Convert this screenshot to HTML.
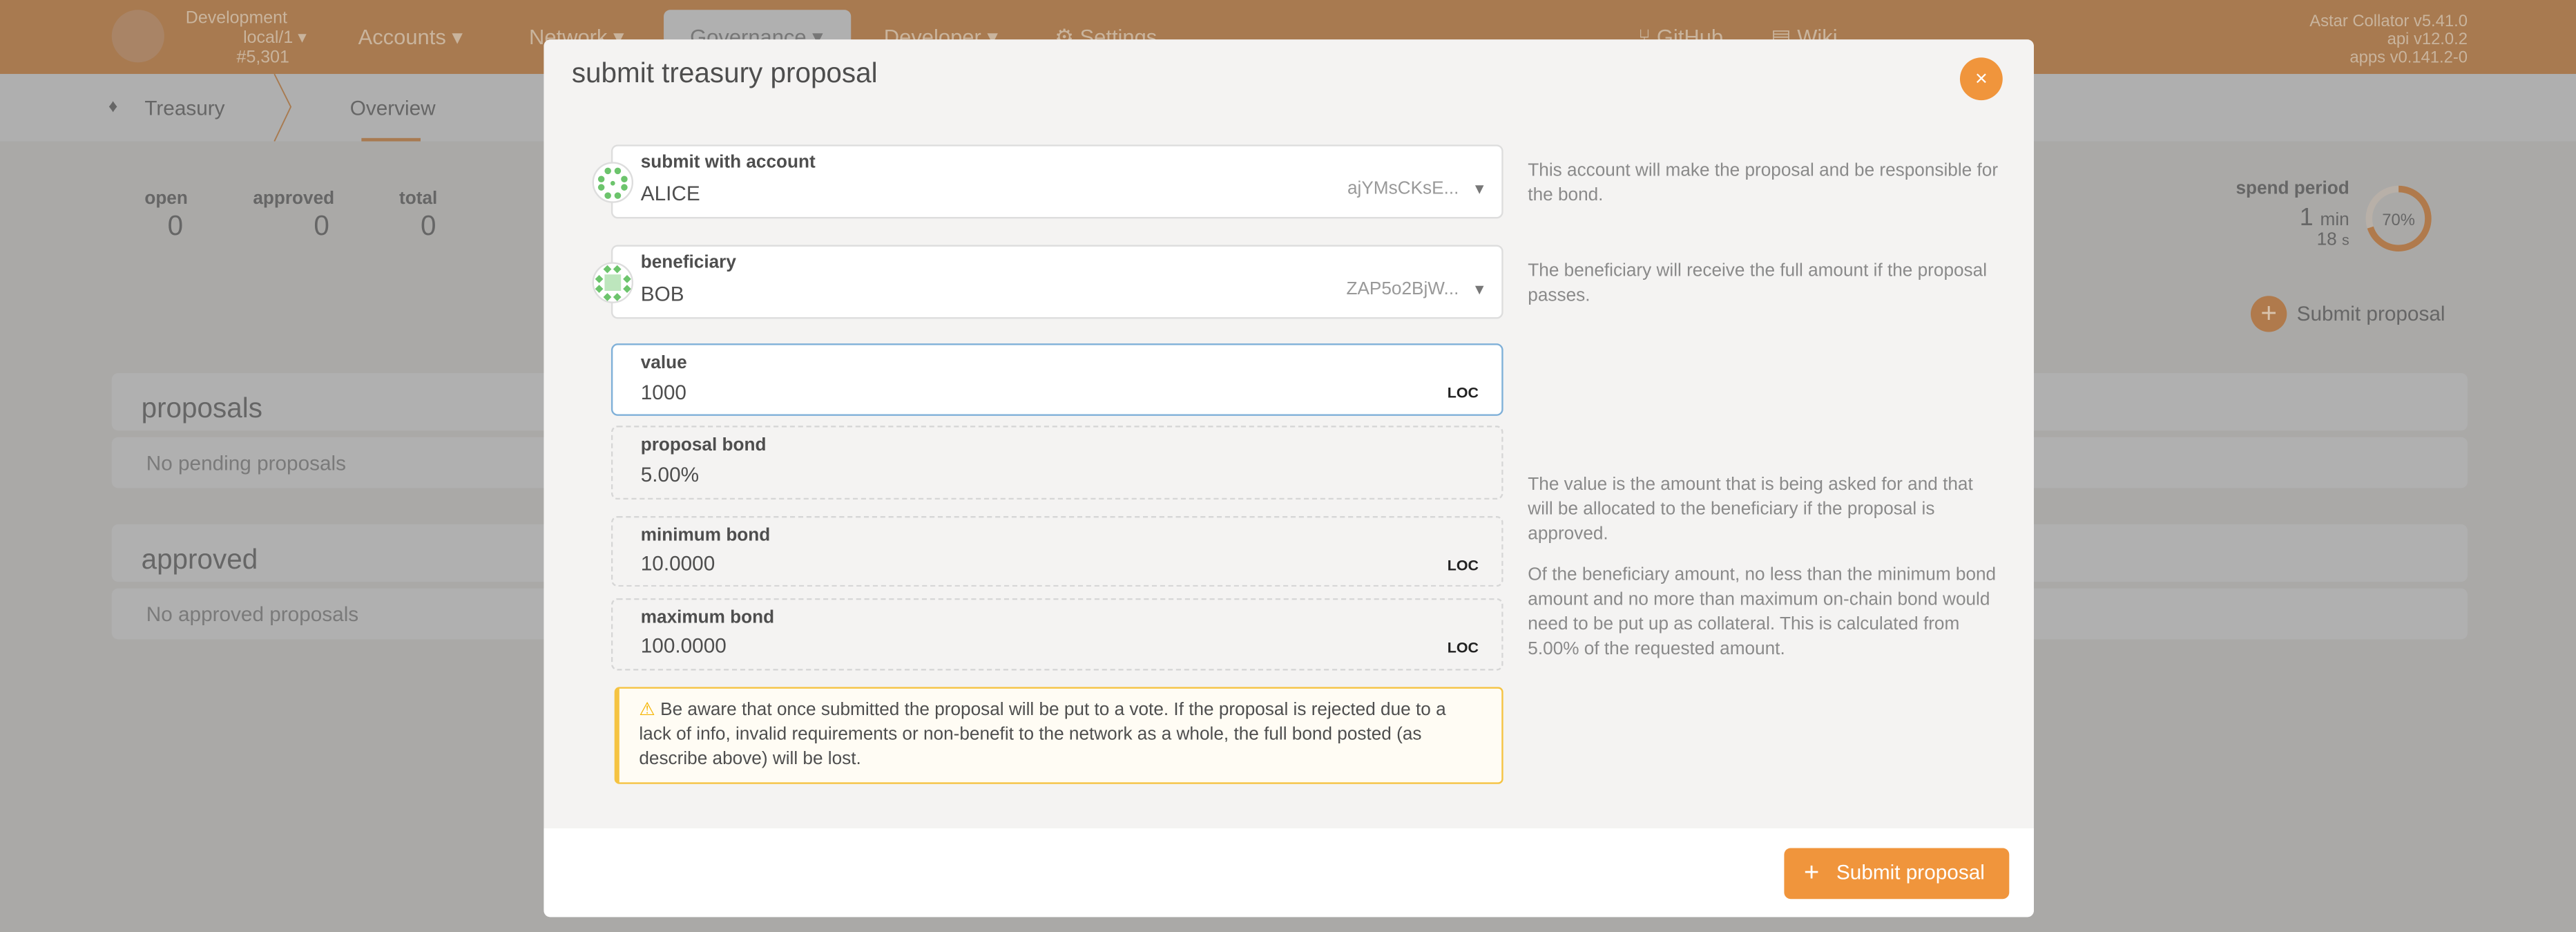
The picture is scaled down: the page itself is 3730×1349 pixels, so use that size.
<!DOCTYPE html>
<html><head><meta charset="utf-8">
<style>
*{box-sizing:border-box;margin:0;padding:0}
html,body{width:3730px;height:1349px;overflow:hidden;background:#aaa9a7}
#w{position:absolute;left:0;top:0;width:1568px;height:567px;transform:scale(2.37883);transform-origin:0 0;font-family:"Liberation Sans",sans-serif;background:#aaa9a7}
.a{position:absolute;white-space:nowrap}
.hd{position:absolute;left:0;top:0;width:1568px;height:45px;background:#a87a50}
.sub{position:absolute;left:0;top:45px;width:1568px;height:41px;background:#afafaf}
.ht{color:#c9b49d;font-size:13px}
.pan{position:absolute;left:68px;width:1434px;background:#b0b0b0;border-radius:4px}
.m{position:absolute;left:331px;top:24px;width:907px;height:534px;background:#f4f3f2;border-radius:4px;overflow:hidden}
.f{position:absolute;left:41px;width:543px;border-radius:4px}
.f .l{position:absolute;left:18px;font-size:11px;font-weight:bold;color:#4e4e4e}
.f .v{position:absolute;left:18px;font-size:12.5px;color:#4e4e4e}
.loc{position:absolute;right:14px;font-size:9px;font-weight:bold;color:#222}
.help{position:absolute;left:599px;width:292px;font-size:11px;line-height:15px;color:#8a8a8a;white-space:normal}
</style></head><body><div id="w">
<div class="hd"></div>
<div class="a" style="left:68px;top:6px;width:32px;height:32px;border-radius:50%;background:#a98466"></div>
<div class="a ht" style="left:113px;top:5px;font-size:10.5px">Development</div>
<div class="a ht" style="left:148px;top:17px;font-size:10.5px">local/1 ▾</div>
<div class="a ht" style="left:144px;top:29px;font-size:10.5px">#5,301</div>
<div class="a ht" style="left:218px;top:15px">Accounts ▾</div>
<div class="a ht" style="left:322px;top:15px">Network ▾</div>
<div class="a" style="left:404px;top:6px;width:114px;height:39px;background:#b0b0b0;border-radius:4px 4px 0 0"></div>
<div class="a" style="left:420px;top:15px;font-size:13px;color:#777">Governance ▾</div>
<div class="a ht" style="left:538px;top:15px">Developer ▾</div>
<div class="a ht" style="left:642px;top:15px">⚙ Settings</div>
<div class="a ht" style="left:997px;top:15px">⑂ GitHub</div>
<div class="a ht" style="left:1078px;top:15px">▤ Wiki</div>
<div class="a ht" style="right:66px;top:8px;font-size:10px;text-align:right;line-height:11px">Astar Collator v5.41.0<br>api v12.0.2<br>apps v0.141.2-0</div>
<div class="sub"></div>
<div class="a" style="left:66px;top:59px;font-size:11px;color:#666">♦</div>
<div class="a" style="left:88px;top:59px;font-size:12.5px;color:#666">Treasury</div>
<svg class="a" style="left:165px;top:45px" width="16" height="41"><path d="M2 0 L12 20 L2 41" stroke="#a87a50" stroke-width="0.8" fill="none"/></svg>
<div class="a" style="left:213px;top:59px;font-size:12.5px;color:#666">Overview</div>
<div class="a" style="left:220px;top:84px;width:36px;height:2px;background:#a87a50"></div>
<div class="a" style="left:88px;top:115px;font-size:11px;font-weight:bold;color:#666">open</div>
<div class="a" style="left:102px;top:128px;font-size:17px;color:#666">0</div>
<div class="a" style="left:154px;top:115px;font-size:11px;font-weight:bold;color:#666">approved</div>
<div class="a" style="left:191px;top:128px;font-size:17px;color:#666">0</div>
<div class="a" style="left:243px;top:115px;font-size:11px;font-weight:bold;color:#666">total</div>
<div class="a" style="left:256px;top:128px;font-size:17px;color:#666">0</div>
<div class="a" style="right:138px;top:109px;font-size:11px;font-weight:bold;color:#666">spend period</div>
<div class="a" style="right:138px;top:124px;font-size:15px;color:#666">1 <span style="font-size:11px">min</span></div>
<div class="a" style="right:138px;top:140px;font-size:11px;color:#666">18 <span style="font-size:9px">s</span></div>
<svg class="a" style="left:1439px;top:112px" width="42" height="42"><circle cx="21" cy="21" r="18" fill="none" stroke="#b8b0a8" stroke-width="4"/><circle cx="21" cy="21" r="18" fill="none" stroke="#b07a4c" stroke-width="4" stroke-dasharray="79.2 113.1" transform="rotate(-90 21 21)"/><text x="21" y="25" font-size="10" text-anchor="middle" fill="#666" font-family="Liberation Sans">70%</text></svg>
<div class="a" style="left:1370px;top:180px;width:22px;height:22px;border-radius:50%;background:#b07a4c;color:#d9c3ad;font-size:17px;line-height:21px;text-align:center">+</div>
<div class="a" style="left:1398px;top:184px;font-size:12.5px;color:#666">Submit proposal</div>
<div class="pan" style="top:227px;height:35px"></div>
<div class="a" style="left:86px;top:239px;font-size:17px;color:#666">proposals</div>
<div class="pan" style="top:266px;height:31px"></div>
<div class="a" style="left:89px;top:275px;font-size:12.5px;color:#7a7a7a">No pending proposals</div>
<div class="pan" style="top:319px;height:35px"></div>
<div class="a" style="left:86px;top:331px;font-size:17px;color:#666">approved</div>
<div class="pan" style="top:358px;height:31px"></div>
<div class="a" style="left:89px;top:367px;font-size:12.5px;color:#7a7a7a">No approved proposals</div>

<div class="m">
<div class="a" style="left:17px;top:11px;font-size:17px;color:#4e4e4e">submit treasury proposal</div>
<div class="a" style="left:862px;top:11px;width:26px;height:26px;border-radius:50%;background:#f0953c;color:#fff;font-size:13px;line-height:25px;text-align:center">×</div>

<div class="f" style="top:64px;height:45px;background:#fff;border:1px solid #ddd"></div>
<svg class="a" style="left:29px;top:74px" width="26" height="26"><circle cx="13" cy="13" r="12" fill="#fff" stroke="#ddd"/><g fill="#6cc46c"><circle cx="10" cy="6" r="2"/><circle cx="16" cy="6" r="2"/><circle cx="6" cy="11" r="2"/><circle cx="20" cy="11" r="2"/><circle cx="6" cy="16" r="2"/><circle cx="20" cy="16" r="2"/><circle cx="10" cy="21" r="2"/><circle cx="16" cy="21" r="2"/><circle cx="13" cy="13.5" r="1.4"/></g></svg>
<div class="f" style="top:64px;height:45px"><div class="l" style="top:5px">submit with account</div><div class="v" style="top:23px">ALICE</div><div class="a" style="right:27px;top:21px;font-size:11px;color:#999">ajYMsCKsE...</div><div class="a" style="right:10px;top:22px;font-size:9px;color:#777">▼</div></div>

<div class="f" style="top:125px;height:45px;background:#fff;border:1px solid #ddd"></div>
<svg class="a" style="left:29px;top:135px" width="26" height="26"><circle cx="13" cy="13" r="12" fill="#fff" stroke="#ddd"/><rect x="8" y="8" width="10" height="10" fill="#bde6bd"/><g fill="#6cc46c"><rect x="8" y="3" width="3.5" height="3.5" transform="rotate(45 9.7 4.7)"/><rect x="14" y="3" width="3.5" height="3.5" transform="rotate(45 15.7 4.7)"/><rect x="3" y="9" width="3.5" height="3.5" transform="rotate(45 4.7 10.7)"/><rect x="20" y="9" width="3.5" height="3.5" transform="rotate(45 21.7 10.7)"/><rect x="3" y="15" width="3.5" height="3.5" transform="rotate(45 4.7 16.7)"/><rect x="20" y="15" width="3.5" height="3.5" transform="rotate(45 21.7 16.7)"/><rect x="8" y="20" width="3.5" height="3.5" transform="rotate(45 9.7 21.7)"/><rect x="14" y="20" width="3.5" height="3.5" transform="rotate(45 15.7 21.7)"/></g></svg>
<div class="f" style="top:125px;height:45px"><div class="l" style="top:5px">beneficiary</div><div class="v" style="top:23px">BOB</div><div class="a" style="right:27px;top:21px;font-size:11px;color:#999">ZAP5o2BjW...</div><div class="a" style="right:10px;top:22px;font-size:9px;color:#777">▼</div></div>

<div class="f" style="top:185px;height:44px;background:#fff;border:1px solid #7fb0d8"><div class="l" style="top:5px;left:17px">value</div><div class="v" style="top:22px;left:17px">1000</div><div class="loc" style="top:24px">LOC</div></div>
<div class="f" style="top:235px;height:45px;border:1px dashed #d6d6d6"><div class="l" style="top:5px;left:17px">proposal bond</div><div class="v" style="top:22px;left:17px">5.00%</div></div>
<div class="f" style="top:290px;height:43px;border:1px dashed #d6d6d6"><div class="l" style="top:5px;left:17px">minimum bond</div><div class="v" style="top:21px;left:17px">10.0000</div><div class="loc" style="top:24px">LOC</div></div>
<div class="f" style="top:340px;height:44px;border:1px dashed #d6d6d6"><div class="l" style="top:5px;left:17px">maximum bond</div><div class="v" style="top:21px;left:17px">100.0000</div><div class="loc" style="top:24px">LOC</div></div>
<div class="a" style="left:43px;top:394px;width:541px;height:59px;background:#fffcf4;border:1px solid #f5c342;border-left:3px solid #f5c342;border-radius:3px;padding:6px 12px;font-size:11px;line-height:15px;color:#4e4e4e;white-space:normal"><span style="color:#f5b400">⚠</span> Be aware that once submitted the proposal will be put to a vote. If the proposal is rejected due to a lack of info, invalid requirements or non-benefit to the network as a whole, the full bond posted (as describe above) will be lost.</div>

<div class="help" style="top:73px">This account will make the proposal and be responsible for the bond.</div>
<div class="help" style="top:134px">The beneficiary will receive the full amount if the proposal passes.</div>
<div class="help" style="top:264px;width:282px">The value is the amount that is being asked for and that will be allocated to the beneficiary if the proposal is approved.</div>
<div class="help" style="top:319px">Of the beneficiary amount, no less than the minimum bond amount and no more than maximum on-chain bond would need to be put up as collateral. This is calculated from 5.00% of the requested amount.</div>

<div class="a" style="left:0;top:480px;width:907px;height:54px;background:#fff"></div>
<div class="a" style="left:755px;top:492px;width:137px;height:31px;background:#f0953c;border-radius:4px;color:#fff;font-size:12.5px;line-height:31px;padding-left:12px"><span style="font-size:16px;vertical-align:-1px">+</span>&nbsp;&nbsp; Submit proposal</div>
</div>
</div></body></html>
